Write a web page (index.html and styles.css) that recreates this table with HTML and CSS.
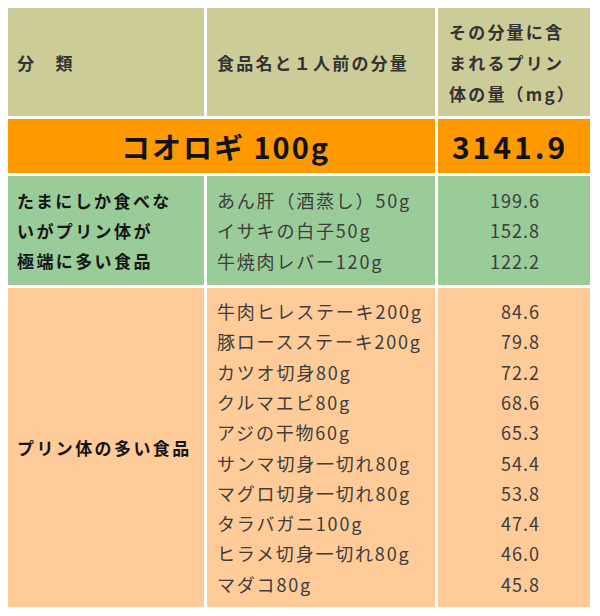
FILE: index.html
```html
<!DOCTYPE html>
<html lang="ja">
<head>
<meta charset="utf-8">
<link rel="stylesheet" href="styles.css">
</head>
<body>
<table class="purine">
  <colgroup>
    <col class="c1">
    <col class="c2">
    <col class="c3">
  </colgroup>
  <tr class="head">
    <td class="h1">分　類</td>
    <td class="h2">食品名と１人前の分量</td>
    <td class="h3"><div>その分量に含</div><div>まれるプリン</div><div>体の量（mg）</div></td>
  </tr>
  <tr class="top">
    <td colspan="2" class="top-name">コオロギ 100g</td>
    <td class="top-val">3141.9</td>
  </tr>
  <tr class="green">
    <td class="cat"><div>たまにしか食べな</div><div>いがプリン体が</div><div>極端に多い食品</div></td>
    <td class="foods"><div>あん肝（酒蒸し）50g</div><div>イサキの白子50g</div><div>牛焼肉レバー120g</div></td>
    <td class="vals"><div>199.6</div><div>152.8</div><div>122.2</div></td>
  </tr>
  <tr class="peach">
    <td class="cat">プリン体の多い食品</td>
    <td class="foods">
      <div>牛肉ヒレステーキ200g</div>
      <div>豚ロースステーキ200g</div>
      <div>カツオ切身80g</div>
      <div>クルマエビ80g</div>
      <div>アジの干物60g</div>
      <div>サンマ切身一切れ80g</div>
      <div>マグロ切身一切れ80g</div>
      <div>タラバガニ100g</div>
      <div>ヒラメ切身一切れ80g</div>
      <div>マダコ80g</div>
    </td>
    <td class="vals">
      <div>84.6</div>
      <div>79.8</div>
      <div>72.2</div>
      <div>68.6</div>
      <div>65.3</div>
      <div>54.4</div>
      <div>53.8</div>
      <div>47.4</div>
      <div>46.0</div>
      <div>45.8</div>
    </td>
  </tr>
</table>
</body>
</html>
```

FILE: styles.css
```css
html, body {
  background: #ffffff;
}
body {
  margin: 5px;
  font-family: "Noto Sans CJK JP", "Noto Sans", sans-serif;
}
.purine {
  border-collapse: separate;
  border-spacing: 3px;
  table-layout: fixed;
  width: 588px;
}
.c1 { width: 196px; }
.c2 { width: 228px; }
.c3 { width: 152px; }
.purine td {
  padding: 0;
  vertical-align: middle;
}
.head td {
  background: #cccc99;
  height: 108px;
  color: #333333;
  font-size: 17px;
  font-weight: 700;
  letter-spacing: 2.2px;
  line-height: 31px;
}
.h1 { padding-left: 9px !important; }
.h2 { padding-left: 10px !important; }
.h3 { padding-left: 11px !important; }
.top td {
  background: #ff9900;
  height: 54px;
  color: #111111;
  font-weight: 700;
  font-size: 29px;
  letter-spacing: 2px;
  text-align: center;
}
.top-name { padding-left: 8px !important; }
.top .top-val {
  font-size: 30px;
  letter-spacing: 3px;
  padding-right: 8px;
}
.green td {
  background: #99cc99;
  height: 109px;
}
.peach td {
  background: #ffcc99;
  height: 319px;
}
.cat {
  padding-left: 9px !important;
  font-size: 17px;
  font-weight: 700;
  color: #151515;
  letter-spacing: 2.4px;
  line-height: 30px;
}
.foods {
  padding-left: 10px !important;
  font-size: 18px;
  color: #3d3d3d;
  letter-spacing: 1.8px;
  line-height: 30.3px;
}
.vals {
  padding-right: 50px !important;
  text-align: right;
  font-size: 18px;
  color: #3d3d3d;
  letter-spacing: 1px;
  line-height: 30.3px;
}
```
